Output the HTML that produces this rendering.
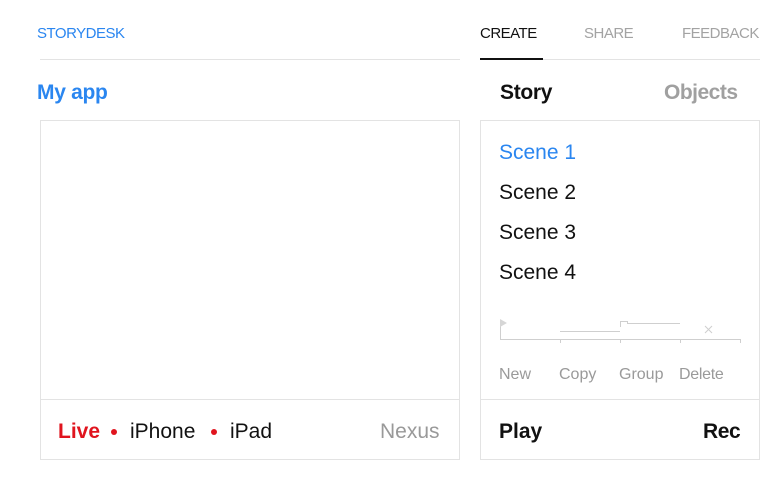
<!DOCTYPE html>
<html><head><meta charset="utf-8"><style>
body{margin:0;width:780px;height:480px;background:#fff;font-family:"Liberation Sans",sans-serif;position:relative;overflow:hidden}
.a{position:absolute;white-space:nowrap;line-height:1}
.box{position:absolute;border:1px solid #e3e3e3;box-sizing:border-box}
.hl{position:absolute;height:1px;background:#e3e3e3}
.h{font-size:15px;letter-spacing:-0.5px;top:26px}
</style></head><body>
<div class="a h" style="left:37px;color:#2a86f0">STORYDESK</div>
<div class="a h" style="left:480px;color:#111">CREATE</div>
<div class="a h" style="left:584px;color:#a3a3a3">SHARE</div>
<div class="a h" style="left:682px;color:#a3a3a3">FEEDBACK</div>
<div class="hl" style="left:40px;top:59px;width:420px"></div>
<div class="hl" style="left:480px;top:59px;width:280px"></div>
<div style="position:absolute;left:480px;top:58px;width:63px;height:2px;background:#111"></div>

<div class="a" style="left:37px;top:82px;font-size:21px;color:#2a86f0;font-weight:bold;letter-spacing:-0.3px">My app</div>
<div class="a" style="left:500px;top:82px;font-size:21px;color:#111;font-weight:bold;letter-spacing:-0.3px">Story</div>
<div class="a" style="left:664px;top:82px;font-size:21px;color:#a0a0a0;font-weight:bold;letter-spacing:-0.5px">Objects</div>

<div class="box" style="left:40px;top:120px;width:420px;height:340px"></div>
<div class="hl" style="left:40px;top:399px;width:420px"></div>
<div class="a" style="left:58px;top:421px;font-size:21px;color:#e0141e;font-weight:bold">Live</div>
<div style="position:absolute;left:111px;top:429px;width:6px;height:6px;border-radius:50%;background:#e0141e"></div>
<div class="a" style="left:130px;top:421px;font-size:21px;color:#111">iPhone</div>
<div style="position:absolute;left:211px;top:429px;width:6px;height:6px;border-radius:50%;background:#e0141e"></div>
<div class="a" style="left:230px;top:421px;font-size:21px;color:#111">iPad</div>
<div class="a" style="left:380px;top:421px;font-size:21px;color:#999">Nexus</div>

<div class="box" style="left:480px;top:120px;width:280px;height:340px"></div>
<div class="hl" style="left:480px;top:399px;width:280px"></div>
<div class="a" style="left:499px;top:142px;font-size:21px;color:#2a86f0">Scene 1</div>
<div class="a" style="left:499px;top:182px;font-size:21px;color:#111">Scene 2</div>
<div class="a" style="left:499px;top:222px;font-size:21px;color:#111">Scene 3</div>
<div class="a" style="left:499px;top:262px;font-size:21px;color:#111">Scene 4</div>
<svg style="position:absolute;left:0;top:0" width="780" height="480">
<g stroke="#cfcfcf" stroke-width="1" fill="none">
<path d="M500.5 320V339.5H740.5M560.5 339v4M620.5 339v4M680.5 339v4M740.5 339v4"/>
<path d="M560 331.5H620"/>
<path d="M620.5 327V321.5H627.5V323.5H680"/>
<path d="M705 326l7 7M712 326l-7 7"/>
</g>
<path d="M500 319l7 4-7 4z" fill="#d6d6d6"/>
</svg>
<div class="a" style="left:499px;top:367px;font-size:16px;color:#9a9a9a">New</div>
<div class="a" style="left:559px;top:367px;font-size:16px;color:#9a9a9a">Copy</div>
<div class="a" style="left:619px;top:367px;font-size:16px;color:#9a9a9a">Group</div>
<div class="a" style="left:679px;top:367px;font-size:16px;color:#9a9a9a;letter-spacing:-0.3px">Delete</div>
<div class="a" style="left:499px;top:421px;font-size:21px;color:#111;font-weight:bold">Play</div>
<div class="a" style="left:703px;top:421px;font-size:21px;color:#111;font-weight:bold;letter-spacing:-0.4px">Rec</div>
</body></html>
